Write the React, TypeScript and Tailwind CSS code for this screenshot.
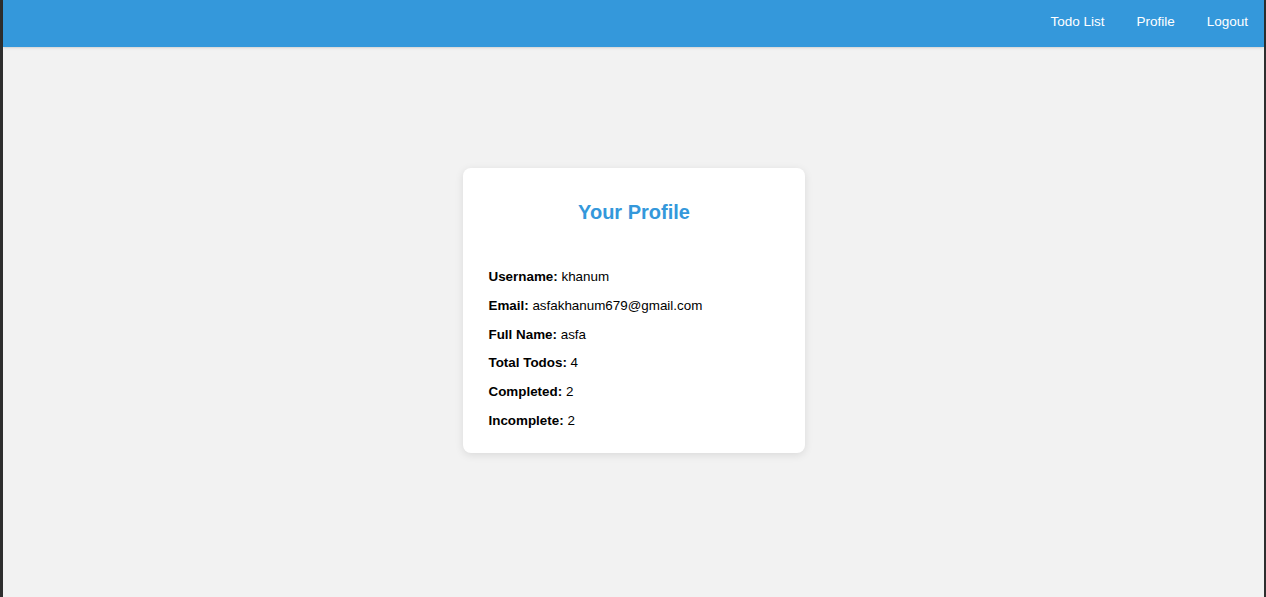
export default function App() {
  const rows: [string, string][] = [
    ["Username:", "khanum"],
    ["Email:", "asfakhanum679@gmail.com"],
    ["Full Name:", "asfa"],
    ["Total Todos:", "4"],
    ["Completed:", "2"],
    ["Incomplete:", "2"],
  ];

  return (
    <div
      className="flex h-[597px] flex-col border-l-[3px] border-r-[2px] border-[#2e2e2e] bg-[#f2f2f2]"
      style={{ fontFamily: '"Liberation Sans", Arial, sans-serif' }}
    >
      <header className="flex h-[47px] shrink-0 items-center justify-end bg-[#3498db] pr-4 pb-[2px] shadow-sm">
        <nav className="flex items-center gap-[32px] text-[13.5px] text-white">
          <a href="#">Todo List</a>
          <a href="#">Profile</a>
          <a href="#">Logout</a>
        </nav>
      </header>
      <main className="flex flex-1 justify-center pt-[121px]">
        <div className="h-fit w-[342px] rounded-lg bg-white pr-[25px] pl-[26px] pt-[25px] pb-[24px] shadow-[0_2px_8px_rgba(0,0,0,0.1)]">
          <h2 className="mt-[7px] text-center text-[20px] leading-6 font-bold text-[#3498db]">
            Your Profile
          </h2>
          <div className="mt-[45px] flex flex-col gap-[12.8px] text-[13.4px] leading-4 text-black">
            {rows.map(([label, value]) => (
              <p key={label}>
                <span className="font-bold">{label}</span> {value}
              </p>
            ))}
          </div>
        </div>
      </main>
    </div>
  );
}
